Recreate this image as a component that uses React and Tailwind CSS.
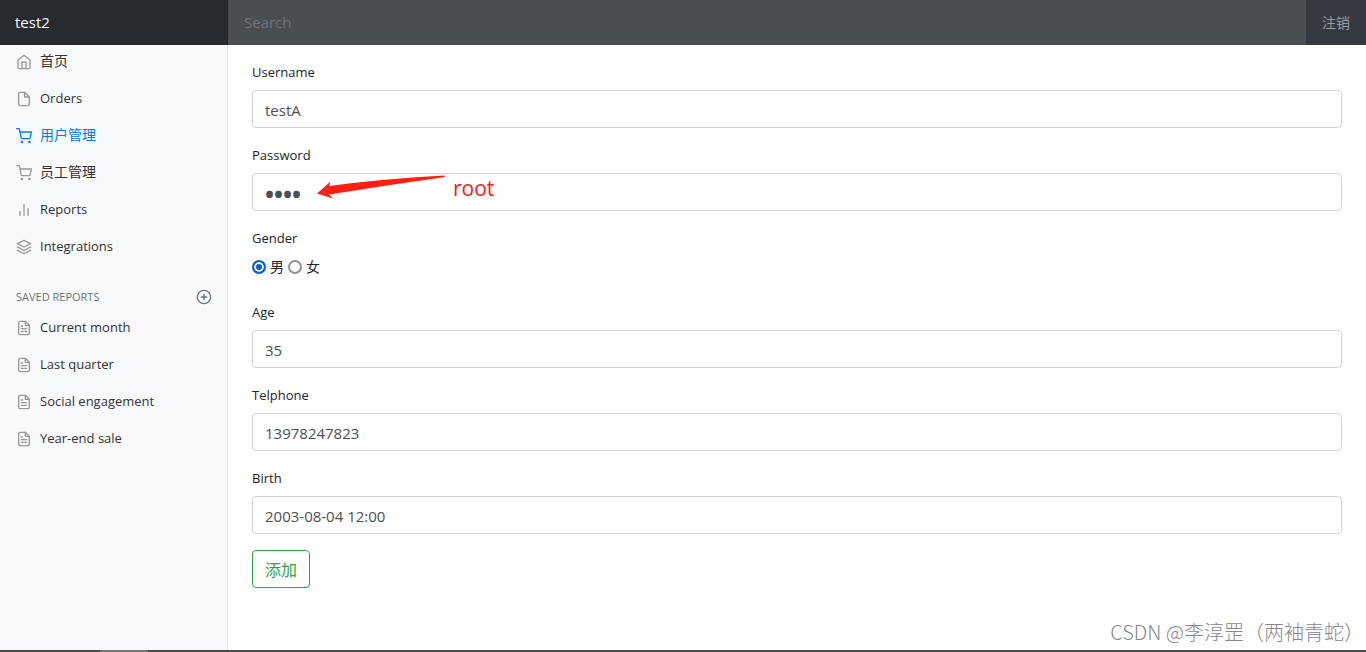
import { useState } from 'react';
import {
  FiBarChart2,
  FiFile,
  FiFileText,
  FiHome,
  FiLayers,
  FiPlusCircle,
  FiShoppingCart,
} from 'react-icons/fi';

const menu = [
  { label: '首页', icon: FiHome, size: 'text-sm' },
  { label: 'Orders', icon: FiFile },
  { label: '用户管理', icon: FiShoppingCart, size: 'text-sm', active: true },
  { label: '员工管理', icon: FiShoppingCart, size: 'text-sm' },
  { label: 'Reports', icon: FiBarChart2 },
  { label: 'Integrations', icon: FiLayers },
];

const savedReports = [
  { label: 'Current month', icon: FiFileText },
  { label: 'Last quarter', icon: FiFileText },
  { label: 'Social engagement', icon: FiFileText },
  { label: 'Year-end sale', icon: FiFileText },
];

function NavList({ items }) {
  return (
    <ul>
      {items.map(({ label, icon: Icon, size = 'text-[13px]', active }) => (
        <li key={label}>
          <a
            href="#"
            className={`flex h-[37px] items-center gap-2 px-4 ${active ? 'text-[#007bff]' : 'text-[#333]'}`}
          >
            <Icon className={`size-4 shrink-0 ${active ? '' : 'text-[#999]'}`} />
            <span className={`${size} pb-0.5 leading-5`}>{label}</span>
          </a>
        </li>
      ))}
    </ul>
  );
}

function Field({ id, label, textStyle = 'text-[15px]', children, ...props }) {
  return (
    <div className="mb-4">
      <label htmlFor={id} className="mb-1.5 block leading-[23px]">{label}</label>
      <div className="relative">
        <input
          id={id}
          className={`block h-[38px] w-full rounded border border-[#ced4da] bg-white px-3 pt-0.5 text-[#495057] ${textStyle}`}
          {...props}
        />
        {children}
      </div>
    </div>
  );
}

function App() {
  const [form, setForm] = useState({
    username: 'testA',
    password: 'root',
    gender: 'male',
    age: '35',
    telphone: '13978247823',
    birth: '2003-08-04 12:00',
  });

  const update = (e) => setForm({ ...form, [e.target.name]: e.target.value });

  return (
    <div className="relative flex min-h-screen flex-col bg-white font-['Open_Sans','Noto_Sans_CJK_SC',sans-serif] text-[13px] text-[#212529]">
      <header className="z-10 flex h-[45px] bg-[#343a40]">
        <a href="#" className="flex w-[228px] shrink-0 items-center border-r border-[#1f2225] bg-[#272a2f] px-[15px] text-[15px] text-white">
          test2
        </a>
        <input
          type="text"
          aria-label="Search"
          placeholder="Search"
          className="min-w-0 flex-1 bg-[#494e51] px-4 text-[15px] text-white placeholder:text-[#6c757d]"
        />
        <a href="#" className="flex shrink-0 items-center px-4 text-sm text-[#999c9f]">注销</a>
      </header>

      <div className="flex flex-1">
        <nav className="-mt-0.5 w-[228px] shrink-0 border-r border-[#dcdee0] bg-[#f8f9fa]">
          <NavList items={menu} />
          <div className="mt-6 flex h-5 items-start justify-between pr-[15px] pl-4 text-[#6c757d]">
            <h6 className="text-[11px] leading-4">SAVED REPORTS</h6>
            <a href="#" aria-label="Add a new report">
              <FiPlusCircle className="size-4" />
            </a>
          </div>
          <NavList items={savedReports} />
        </nav>

        <main className="min-w-0 flex-1 px-6 pt-4">
          <form onSubmit={(e) => e.preventDefault()}>
            <Field id="username" name="username" label="Username" type="text" value={form.username} onChange={update} />
            <Field
              id="password"
              name="password"
              label="Password"
              type="password"
              textStyle="text-2xl font-bold"
              value={form.password}
              onChange={update}
            >
              <svg className="pointer-events-none absolute top-0 left-16 h-7 w-[130px]" viewBox="0 0 130 28">
                <path
                  d="M1 20.500 L14.500 8.500 L13 13 Q70 5.500 128.500 2.500 L129 4 Q72 12 13 21.500 L17 25.500 Z"
                  fill="#ff2010"
                />
              </svg>
              <span className="pointer-events-none absolute top-0 left-[201px] text-[21px] leading-[30px] text-[#ff1a10]">root</span>
            </Field>
            <fieldset className="mb-4">
              <legend className="mb-1.5 leading-[23px]">Gender</legend>
              <div className="mb-2 flex h-[21px] items-center gap-1">
                <label className="flex items-center gap-1 text-sm">
                  <input
                    type="radio"
                    name="gender"
                    value="male"
                    checked={form.gender === 'male'}
                    onChange={update}
                    className="size-3.5 appearance-none rounded-full border-2 border-[#8f8f9d] checked:border-[#0060df] checked:bg-[#0060df] checked:inset-ring-2 checked:inset-ring-white"
                  />
                  男
                </label>
                <label className="flex items-center gap-1 text-sm">
                  <input
                    type="radio"
                    name="gender"
                    value="female"
                    checked={form.gender === 'female'}
                    onChange={update}
                    className="size-3.5 appearance-none rounded-full border-2 border-[#8f8f9d] checked:border-[#0060df] checked:bg-[#0060df] checked:inset-ring-2 checked:inset-ring-white"
                  />
                  女
                </label>
              </div>
            </fieldset>
            <Field id="age" name="age" label="Age" type="text" value={form.age} onChange={update} />
            <Field id="telphone" name="telphone" label="Telphone" type="text" value={form.telphone} onChange={update} />
            <Field id="birth" name="birth" label="Birth" type="text" value={form.birth} onChange={update} />
            <button
              type="submit"
              className="h-[38px] rounded border border-[#28a745] px-3 pt-0.5 text-base text-[#28a745]"
            >
              添加
            </button>
          </form>
        </main>
      </div>

      <p className="absolute right-0.5 bottom-1.5 font-['Noto_Sans_CJK_SC',sans-serif] text-xl font-light text-[#888]">
        CSDN @李淳罡（两袖青蛇）
      </p>
      <div className="flex h-0.5 bg-[#4a4a4a]">
        <div className="ml-[100px] w-12 bg-[#777]" />
      </div>
    </div>
  );
}

export default App;
